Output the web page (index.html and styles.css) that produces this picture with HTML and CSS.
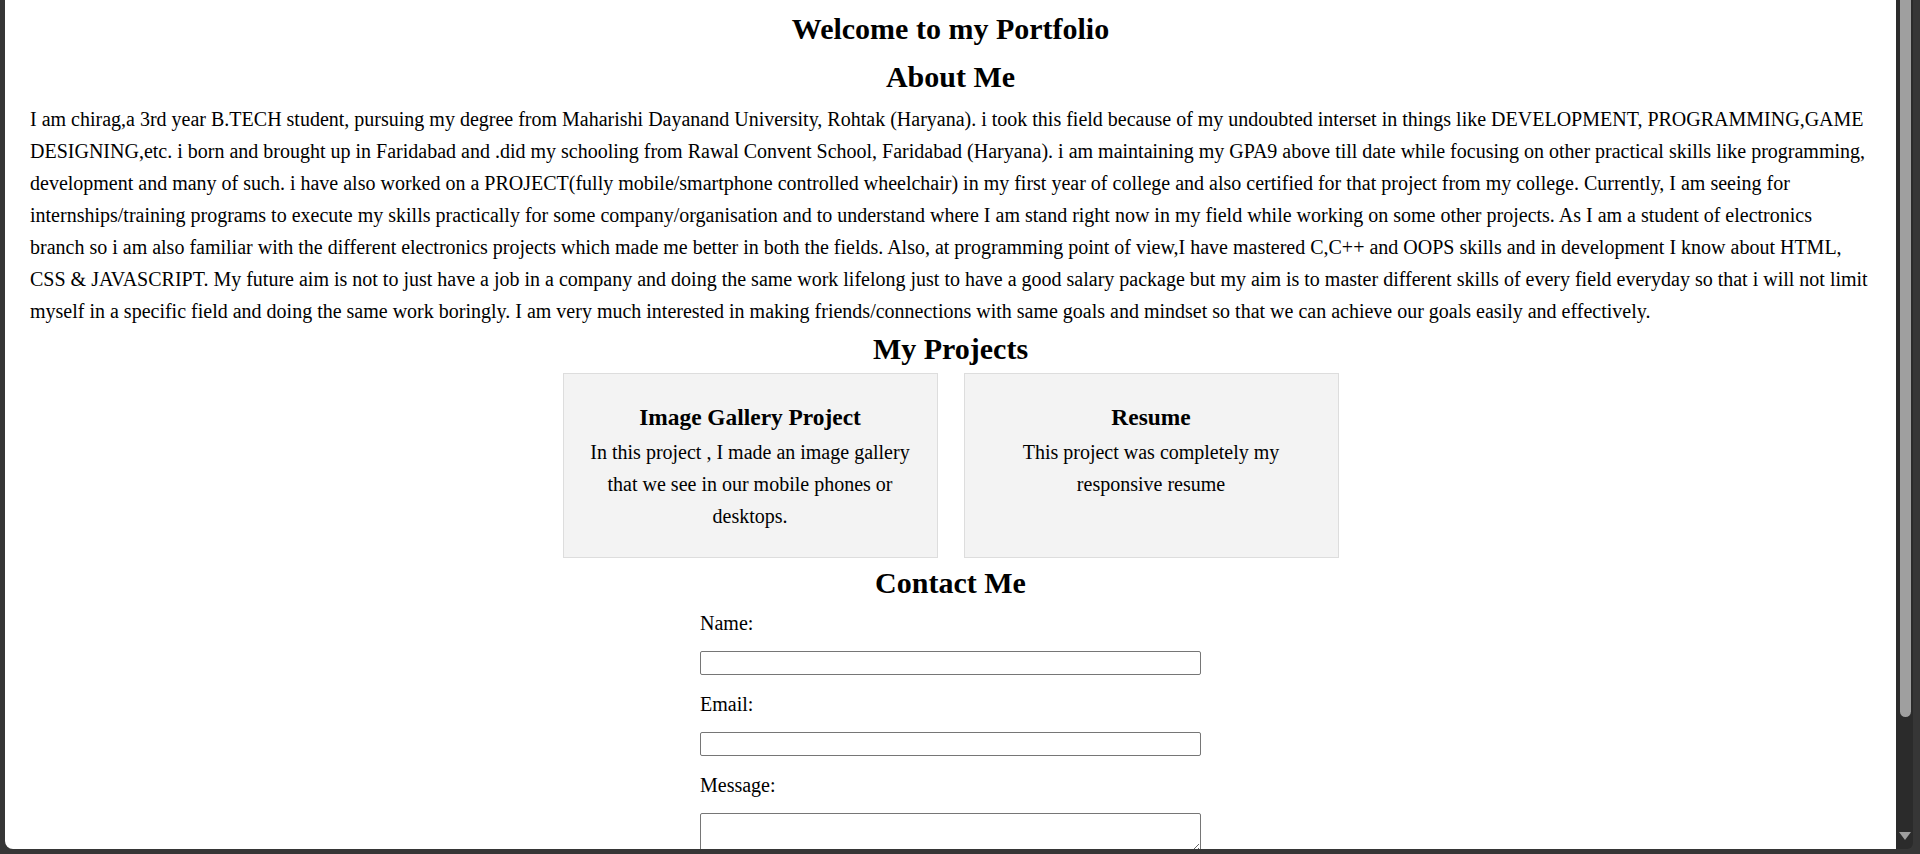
FILE: index.html
```html
<!DOCTYPE html>
<html lang="en">
<head>
<meta charset="utf-8">
<title>Portfolio</title>
<link rel="stylesheet" href="styles.css">
</head>
<body>
<div class="window">
  <div class="viewport">
    <header class="site-header">
      <h1 class="heading heading-top">Welcome to my Portfolio</h1>
    </header>
    <section class="about">
      <h2 class="heading heading-about">About Me</h2>
      <p class="about-text">I am chirag,a 3rd year B.TECH student, pursuing my degree from Maharishi Dayanand University, Rohtak (Haryana). i took this field because of my undoubted interset in things like DEVELOPMENT, PROGRAMMING,GAME DESIGNING,etc. i born and brought up in Faridabad and .did my schooling from Rawal Convent School, Faridabad (Haryana). i am maintaining my GPA9 above till date while focusing on other practical skills like programming, development and many of such. i have also worked on a PROJECT(fully mobile/smartphone controlled wheelchair) in my first year of college and also certified for that project from my college. Currently, I am seeing for internships/training programs to execute my skills practically for some company/organisation and to understand where I am stand right now in my field while working on some other projects. As I am a student of electronics branch so i am also familiar with the different electronics projects which made me better in both the fields. Also, at programming point of view,I have mastered C,C++ and OOPS skills and in development I know about HTML, CSS &amp; JAVASCRIPT. My future aim is not to just have a job in a company and doing the same work lifelong just to have a good salary package but my aim is to master different skills of every field everyday so that i will not limit myself in a specific field and doing the same work boringly. I am very much interested in making friends/connections with same goals and mindset so that we can achieve our goals easily and effectively.</p>
    </section>
    <section class="projects">
      <h2 class="heading heading-projects">My Projects</h2>
      <div class="project-list">
        <div class="card">
          <h3 class="card-title">Image Gallery Project</h3>
          <p class="card-text">In this project , I made an image gallery that we see in our mobile phones or desktops.</p>
        </div>
        <div class="card">
          <h3 class="card-title">Resume</h3>
          <p class="card-text">This project was completely my responsive resume</p>
        </div>
      </div>
    </section>
    <section class="contact">
      <h2 class="heading heading-contact">Contact Me</h2>
      <form class="contact-form">
        <label class="field-label" for="name">Name:</label>
        <input class="field-input" type="text" id="name">
        <label class="field-label" for="email">Email:</label>
        <input class="field-input" type="email" id="email">
        <label class="field-label" for="message">Message:</label>
        <textarea class="field-area" id="message"></textarea>
      </form>
    </section>
  </div>
  <div class="scrollbar">
    <div class="thumb"></div>
    <div class="arrow-down"></div>
  </div>
</div>
</body>
</html>
```

FILE: styles.css
```css
html, body {
  margin: 0;
  padding: 0;
}

body {
  background: #363636;
  font-family: "Liberation Serif", "Times New Roman", serif;
  color: #000;
}

.window {
  display: flex;
  height: 854px;
  box-sizing: border-box;
  padding: 0 7px 5px 5px;
  overflow: hidden;
}

.viewport {
  flex: 1;
  background: #fff;
  overflow: hidden;
  border-bottom-left-radius: 8px;
  padding-top: 11px;
  box-sizing: border-box;
}

.heading {
  margin: 0;
  font-size: 30px;
  line-height: 36px;
  font-weight: bold;
  text-align: center;
}

.heading-top {
  margin-bottom: 12px;
}

.heading-about {
  margin-bottom: 8px;
}

.about-text {
  margin: 0 25px 4px;
  font-size: 20px;
  line-height: 32px;
}

.heading-projects {
  margin-bottom: 6px;
}

.project-list {
  display: flex;
  justify-content: center;
  gap: 26px;
  margin-bottom: 7px;
}

.card {
  width: 375px;
  height: 185px;
  box-sizing: border-box;
  background: #f3f3f3;
  border: 1px solid #dddddd;
  padding: 29px 20px 25px;
  text-align: center;
}

.card-title {
  margin: 0 0 5px;
  font-size: 23.4px;
  line-height: 28px;
  font-weight: bold;
}

.card-text {
  margin: 0;
  font-size: 20px;
  line-height: 32px;
}

.heading-contact {
  margin-bottom: 6px;
}

.contact-form {
  width: 501px;
  margin: 0 auto;
  display: flex;
  flex-direction: column;
}

.field-label {
  display: block;
  font-size: 20px;
  line-height: 32px;
  margin-bottom: 12px;
}

.field-input {
  display: block;
  width: 100%;
  height: 24px;
  box-sizing: border-box;
  margin: 0 0 13px;
  border: 1px solid #767676;
  border-radius: 2px;
  background: #fff;
  padding: 1px 2px;
}

.field-area {
  display: block;
  width: 100%;
  height: 40px;
  box-sizing: border-box;
  margin: 0;
  border: 1px solid #767676;
  border-radius: 2px;
  background: #fff;
}

.scrollbar {
  width: 17px;
  background: #2b2b2b;
  display: flex;
  flex-direction: column;
  align-items: center;
  border-bottom-right-radius: 6px;
}

.thumb {
  width: 11px;
  height: 717px;
  margin-left: 2px;
  background: #9f9f9f;
  border-radius: 0 0 6px 6px;
}

.arrow-down {
  margin-top: auto;
  margin-bottom: 9px;
  width: 0;
  height: 0;
  border-left: 6px solid transparent;
  border-right: 6px solid transparent;
  border-top: 8px solid #9f9f9f;
}
```
